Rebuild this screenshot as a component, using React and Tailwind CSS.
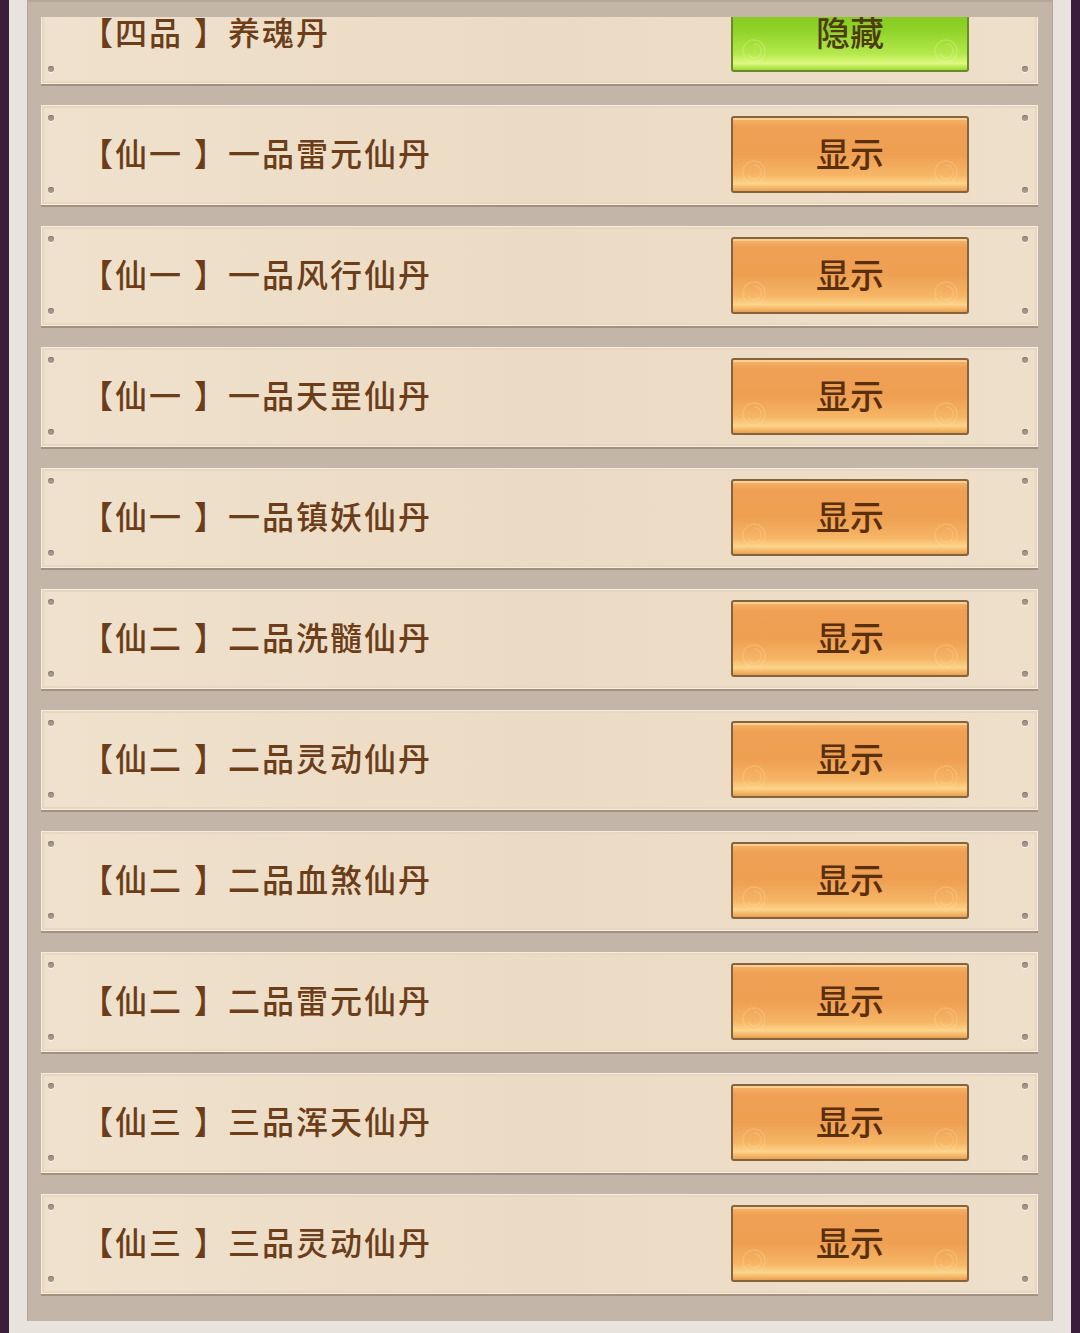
const items = [
  { tag: '四品', name: '养魂丹', shown: true },
  { tag: '仙一', name: '一品雷元仙丹' },
  { tag: '仙一', name: '一品风行仙丹' },
  { tag: '仙一', name: '一品天罡仙丹' },
  { tag: '仙一', name: '一品镇妖仙丹' },
  { tag: '仙二', name: '二品洗髓仙丹' },
  { tag: '仙二', name: '二品灵动仙丹' },
  { tag: '仙二', name: '二品血煞仙丹' },
  { tag: '仙二', name: '二品雷元仙丹' },
  { tag: '仙三', name: '三品浑天仙丹' },
  { tag: '仙三', name: '三品灵动仙丹' },
];

function Dot({ className }) {
  return (
    <span className={`absolute w-[6px] h-[6px] rounded-full bg-[#a4968a] shadow-[inset_0_1px_1px_#857467,0_1px_0_#fbf4ea] ${className}`} />
  );
}

function Swirl({ className, color }) {
  return (
    <svg className={`absolute w-[30px] h-[30px] ${className}`} viewBox="0 0 30 30" fill="none" stroke={color} strokeWidth="1.5">
      <circle cx="15" cy="15" r="11" />
      <path d="M15 8a7 7 0 1 1-6 10" />
    </svg>
  );
}

function ToggleButton({ shown }) {
  if (shown) {
    return (
      <button className="relative flex items-center justify-center pb-[3px] w-[238px] h-[77px] rounded-[3px] border-2 border-[#6b8a2a] bg-[linear-gradient(180deg,#7cc21a_0%,#8fd228_45%,#b4e94c_78%,#def87f_91%,#9dd932_100%)] shadow-[inset_0_2px_0_#b6ea5a] overflow-hidden">
        <Swirl className="left-[6px] bottom-[4px] opacity-25" color="#e9ffb0" />
        <Swirl className="right-[6px] bottom-[4px] opacity-25" color="#e9ffb0" />
        <span className="relative text-[34px] leading-none text-[#4f3b12] font-medium">隐藏</span>
      </button>
    );
  }
  return (
    <button className="relative flex items-center justify-center pb-[3px] w-[238px] h-[77px] rounded-[3px] border-2 border-[#84643f] bg-[linear-gradient(180deg,#f7b46a_0%,#efa054_12%,#ee9f52_50%,#f6b565_78%,#fcd48a_90%,#ec9f4f_100%)] shadow-[inset_0_2px_0_#fbcf8f] overflow-hidden">
      <Swirl className="left-[6px] bottom-[4px] opacity-25" color="#ffe0a8" />
      <Swirl className="right-[6px] bottom-[4px] opacity-25" color="#ffe0a8" />
      <span className="relative text-[34px] leading-none text-[#5a2f0d] font-medium">显示</span>
    </button>
  );
}

function Row({ tag, name, shown }) {
  return (
    <div className="relative h-[100px] shrink-0 flex items-center bg-[linear-gradient(90deg,#efe1cd,#ecdbc4_50%,#eedfca)] border border-[#f6ede0] shadow-[inset_0_0_0_2px_#e8d7c0,0_2px_0_#a3907f]">
      <Dot className="left-[6px] top-[9px]" />
      <Dot className="left-[6px] bottom-[11px]" />
      <Dot className="right-[9px] top-[9px]" />
      <Dot className="right-[9px] bottom-[11px]" />
      <div className="flex-1 flex items-center pl-[39px] pb-[7px] text-[32px] leading-none text-[#6b3e19] font-medium tracking-[2px]">
        <span>【</span>
        <span>{tag}</span>
        <span className="ml-[11px]">】</span>
        <span>{name}</span>
      </div>
      <div className="self-start mt-[10px] mr-[68px]">
        <ToggleButton shown={shown} />
      </div>
    </div>
  );
}

export default function App() {
  return (
    <div className="w-[1080px] h-[1333px] bg-[#3b1d3c] px-[9px] flex overflow-hidden font-['Noto_Sans_CJK_SC',sans-serif]">
      <div className="flex-1 flex flex-col bg-[#e9e3de] px-[18px] pb-[12px]">
        <div className="flex-1 flex flex-col bg-[#c3b5a8] border-x border-[#b4a597] shadow-[inset_0_2px_0_#b5a698] pt-[17px] pb-[25px] pl-[13px] pr-[14px]">
          <div className="flex-1 overflow-hidden">
            <div className="mt-[-33px] flex flex-col gap-[21px]">
              {items.map((it, i) => (
                <Row key={i} {...it} />
              ))}
            </div>
          </div>
        </div>
      </div>
    </div>
  );
}
